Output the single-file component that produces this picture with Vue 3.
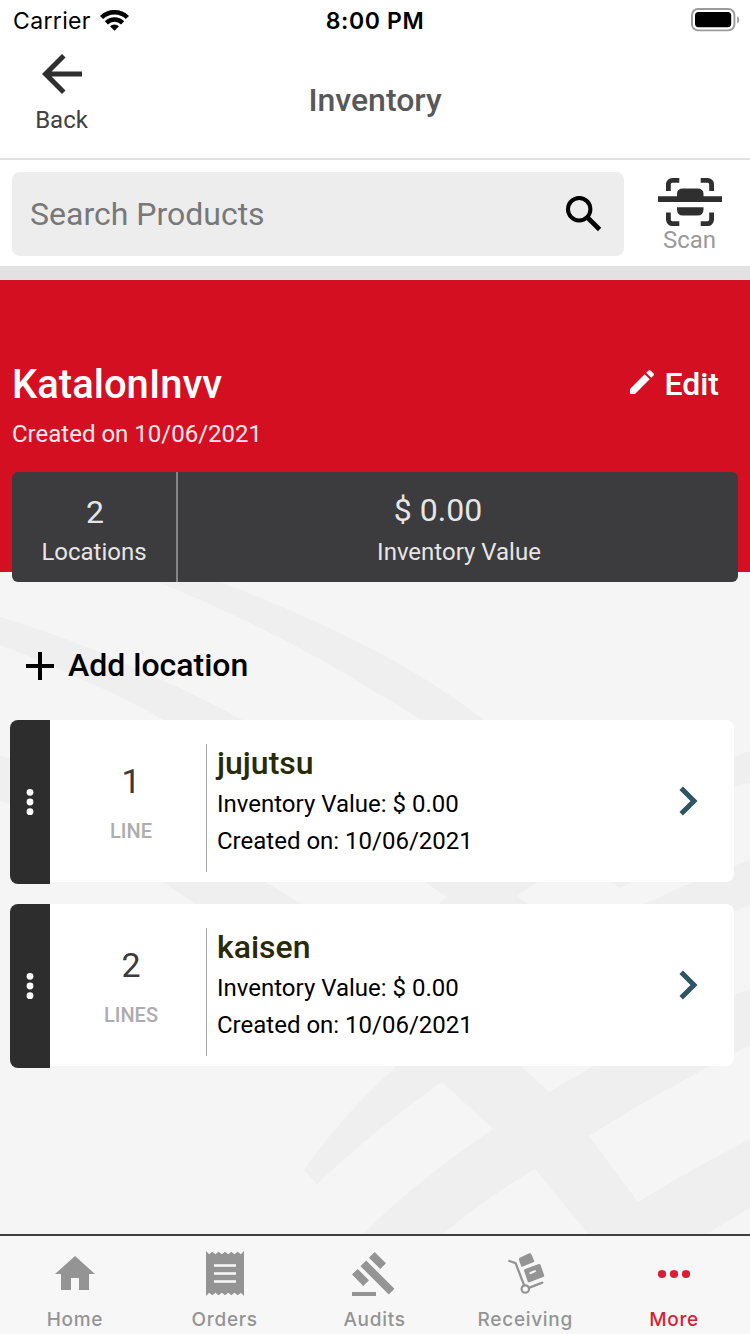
<script setup>
const cards = [
  { name: 'jujutsu', count: 1, unit: 'LINE', value: '$ 0.00', created: '10/06/2021' },
  { name: 'kaisen', count: 2, unit: 'LINES', value: '$ 0.00', created: '10/06/2021' },
]
</script>

<template>
  <div class="screen">
    <div class="status">
      <div class="carrier">
        <span>Carrier</span>
        <svg width="29" height="23" viewBox="0 0 30 23">
          <g fill="none" stroke="#000" stroke-width="4.6">
            <path d="M1.6 8.4a19.2 19.2 0 0 1 26.8 0" />
            <path d="M6.6 13.9a12 12 0 0 1 16.8 0" />
          </g>
          <path d="M15 22.2l-4.6-4.7a6.6 6.6 0 0 1 9.2 0z" />
        </svg>
      </div>
      <span class="time">8:00 PM</span>
      <svg class="battery" width="49" height="24" viewBox="0 0 49 24">
        <rect x="1" y="1" width="42.4" height="21.4" rx="6" fill="none" stroke="#9b9b9b" stroke-width="1.9" />
        <rect x="4" y="4" width="36.2" height="15.2" rx="3.6" />
        <path d="M46.2 8v7.6q2-1.2 2-3.8t-2-3.8z" fill="#9b9b9b" />
      </svg>
    </div>

    <header class="header">
      <div class="back">
        <svg width="60" height="60" viewBox="0 0 24 24">
          <path fill="#2f2f30" d="M20 11H7.83l5.59-5.59L12 4l-8 8 8 8 1.41-1.41L7.83 13H20v-2z" />
        </svg>
        <span>Back</span>
      </div>
      <h1>Inventory</h1>
      <div></div>
    </header>

    <section class="search">
      <div class="field">
        <span>Search Products</span>
        <svg width="36" height="36" viewBox="0 0 36 36" fill="none" stroke="#000">
          <circle cx="13.2" cy="13.2" r="11.2" stroke-width="4" />
          <path d="M22 22l11.6 11.5" stroke-width="4.6" />
        </svg>
      </div>
      <div class="scan">
        <svg width="64" height="48" viewBox="0 0 64 48" fill="#2f2f30">
          <g fill="none" stroke="#2f2f30" stroke-width="4.8">
            <path d="M10.4 13V6.4a4 4 0 0 1 4-4H21.3" />
            <path d="M42.7 2.4H49.6a4 4 0 0 1 4 4V13" />
            <path d="M10.4 34.6v7a4 4 0 0 0 4 4H21.3" />
            <path d="M42.7 45.6H49.6a4 4 0 0 0 4-4v-7" />
          </g>
          <path d="M0 18.3h19V16q0-5.5 6-5.5h14.5q6 0 6 5.5v2.3H64v5.6H0z" />
          <path d="M19 29.2h26.5v2q0 6.3-6 6.3H25q-6 0-6-6.3z" />
        </svg>
        <span>Scan</span>
      </div>
    </section>

    <section class="hero">
      <div class="hero-row">
        <h2>KatalonInvv</h2>
        <div class="edit">
          <svg width="32" height="32" viewBox="0 0 24 24" fill="#fff">
            <path d="M3 17.25V21h3.75L17.81 9.94l-3.75-3.75L3 17.25zM20.71 7.04a1 1 0 0 0 0-1.41l-2.34-2.34a1 1 0 0 0-1.41 0l-1.83 1.83 3.75 3.75 1.83-1.83z" />
          </svg>
          <span>Edit</span>
        </div>
      </div>
      <p class="created">Created on 10/06/2021</p>
      <div class="stats">
        <div class="stat locations">
          <strong>2</strong>
          <span>Locations</span>
        </div>
        <div class="stat value">
          <strong>$ 0.00</strong>
          <span>Inventory Value</span>
        </div>
      </div>
    </section>

    <main class="content">
      <svg class="watermark" width="750" height="662" viewBox="0 572 750 662" fill="#efefef">
        <path d="M132 572H192Q290 606 375 651Q436 682 500 732H438Q405 708 375 692Q270 625 132 572z" />
        <path d="M0 617Q60 635 100 653Q180 685 265 732H185Q130 700 83 680Q40 660 0 645z" />
        <path d="M0 755L20 763V807L0 801z" />
        <path d="M145 872H249L320 915H208Q190 898 145 872z" />
        <path d="M410 872H552L538 882L517 896L545 918H422L447 897z" />
        <path d="M610 882h22l-12 6z" />
        <path d="M720 762L750 751V782L720 792z" />
        <path d="M630 910L662 896Q700 878 750 860V905L720 917z" />
        <path d="M720 1000L750 989V1045L720 1060z" />
        <path d="M415 1050Q345 1110 304 1170L317 1184Q380 1125 442 1082L493 1129Q420 1178 363 1234H443Q490 1195 535 1169L588 1234H707Q728 1220 750 1208V1139Q690 1170 638 1202L589 1136Q650 1097 735 1053L612 1055L549 1092L504 1050z" />
      </svg>

      <div class="add">
        <svg width="28" height="28" viewBox="0 0 28 28"><path d="M12 0h4v12h12v4H16v12h-4V16H0v-4h12z" /></svg>
        <span>Add location</span>
      </div>

      <article v-for="card in cards" :key="card.name" class="card">
        <div class="handle">
          <svg width="8" height="28" viewBox="0 0 8 28" fill="#fff">
            <circle cx="4" cy="4.3" r="3.4" />
            <circle cx="4" cy="14" r="3.4" />
            <circle cx="4" cy="23.7" r="3.4" />
          </svg>
        </div>
        <div class="count">
          <strong>{{ card.count }}</strong>
          <span>{{ card.unit }}</span>
        </div>
        <div class="details">
          <h3>{{ card.name }}</h3>
          <p>Inventory Value: {{ card.value }}</p>
          <p>Created on: {{ card.created }}</p>
        </div>
        <svg class="chevron" width="20" height="30" viewBox="0 0 20 30">
          <path d="M2.2 2.2L15 15L2.2 27.8" fill="none" stroke="#2f5565" stroke-width="5" />
        </svg>
      </article>
    </main>

    <nav class="tabs">
      <div class="tab">
        <svg width="48" height="48" viewBox="0 0 24 24"><path d="M10 20v-6h4v6h5v-8h3L12 3 2 12h3v8z" /></svg>
        <span>Home</span>
      </div>
      <div class="tab">
        <svg width="48" height="48" viewBox="0 0 48 48">
          <path d="M5 1l3.2 3.2L11.3 1.8l3.2 2.4L17.6 1.8l3.2 2.4L24 1.8l3.2 2.4L30.4 1.8l3.1 2.4L36.7 1.8l3.1 2.4L43 1V46l-3.2-3.2-3.1 2.4-3.2-2.4-3.1 2.4-3.2-2.4L24 45.2l-3.2-2.4-3.2 2.4-3.1-2.4-3.2 2.4-3.1-2.4L5 46z" />
          <path d="M13 15.5h22M13 23.5h22M13 31.5h22" stroke="#f7f7f7" stroke-width="2.6" />
        </svg>
        <span>Orders</span>
      </div>
      <div class="tab">
        <svg width="48" height="48" viewBox="0 0 24 24">
          <path d="M1 21h12v2H1zM5.24 8.07l2.83-2.83 14.14 14.14-2.83 2.83zM12.32 1l5.66 5.66-2.83 2.83-5.66-5.66zM3.83 9.48l5.66 5.66-2.83 2.83L1 12.31z" />
        </svg>
        <span>Audits</span>
      </div>
      <div class="tab receiving">
        <svg width="48" height="48" viewBox="0 0 48 48">
          <path d="M8.3 11l6.3 2.2L23 35M28.5 37.6L41.3 32.6" fill="none" stroke="#949494" stroke-width="2.3" stroke-linecap="round" stroke-linejoin="round" />
          <circle cx="24.3" cy="39" r="3.7" fill="none" stroke="#949494" stroke-width="2.2" />
          <path d="M18.7 7.8L28.3 3.3q1.5-.6 2.1.9l3.1 7.5L20.6 16.9q-1.1-2.5-2.5-6.5-.6-1.8.6-2.6z" />
          <path fill-rule="evenodd" d="M24.8 18.7L37.8 14q1.2-.4 1.7.8l3.6 10.3q.4 1.4-.9 2L28.4 32.2q-1.2.4-1.7-.8L23.1 21q-.5-1.6 1.7-2.3zM29.2 22.1q-1 .5-.7 1.3t1.4.5L34.4 22q1-.5.7-1.3t-1.4-.4z" />
        </svg>
        <span>Receiving</span>
      </div>
      <div class="tab active">
        <svg width="48" height="48" viewBox="0 0 48 48">
          <circle cx="12" cy="24" r="4.1" /><circle cx="24" cy="24" r="4.1" /><circle cx="36" cy="24" r="4.1" />
        </svg>
        <span>More</span>
      </div>
    </nav>
  </div>
</template>

<style>
body { margin: 0; background: #fff; }
</style>

<style scoped>
.screen {
  width: 750px;
  height: 1334px;
  display: flex;
  flex-direction: column;
  overflow: hidden;
  background: #fff;
  font-family: Roboto, "Liberation Sans", sans-serif;
  font-size: 24px;
  white-space: nowrap;
}
.screen svg { display: block; flex: none; }
h1, h2, h3, p { margin: 0; font-weight: 500; }
strong { font-weight: 400; }

.status {
  height: 40px;
  box-sizing: border-box;
  padding: 1px 10px 0 13px;
  display: grid;
  grid-template-columns: 1fr auto 1fr;
  align-items: center;
  font-family: Inter, "Liberation Sans", sans-serif;
  font-size: 23px;
}
.carrier { display: flex; align-items: center; gap: 9px; letter-spacing: 0.35px; }
.carrier svg { margin-top: -1px; }
.time { font-weight: 600; letter-spacing: 0.6px; margin-right: 3px; }
.battery { justify-self: end; margin-top: -1px; }

.header {
  height: 118px;
  border-bottom: 2px solid #e2e2e2;
  display: grid;
  grid-template-columns: 124px 1fr 124px;
}
.back {
  display: flex;
  flex-direction: column;
  align-items: center;
  padding-top: 4px;
  color: #414143;
}
.back span { line-height: 32px; margin-right: 1px; }
.header h1 {
  font-size: 32px;
  line-height: 40px;
  padding-top: 40px;
  text-align: center;
  color: #58585a;
}

.search {
  height: 106px;
  border-bottom: 14px solid #e2e2e2;
  display: flex;
}
.field {
  width: 572px;
  height: 84px;
  margin: 12px 0 0 12px;
  padding: 0 22px 0 18px;
  border-radius: 8px;
  background: #ededed;
  display: flex;
  align-items: center;
  justify-content: space-between;
  font-size: 32px;
  color: #787878;
}
.scan {
  width: 64px;
  margin: 18px 0 0 34px;
  display: flex;
  flex-direction: column;
  align-items: center;
  color: #9a9a9a;
}
.scan span { line-height: 28px; margin-right: 1px; }

.hero {
  height: 292px;
  box-sizing: border-box;
  padding: 80px 12px 0;
  background: #d50f22;
  color: #fff;
  position: relative;
  z-index: 1;
}
.hero-row { display: flex; justify-content: space-between; height: 48px; }
.hero h2 { font-size: 40px; line-height: 50px; }
.edit {
  display: flex;
  gap: 6px;
  padding: 6px 19px 0 0;
  font-size: 32px;
  font-weight: 500;
  line-height: 36px;
}
.created { font-weight: 400; line-height: 32px; padding-top: 10px; color: #fbe9eb; }
.stats {
  display: flex;
  height: 110px;
  margin-top: 22px;
  border-radius: 6px;
  background: #3c3b3d;
  color: #e6e6e6;
}
.stat { display: flex; flex-direction: column; align-items: center; }
.stat strong { font-size: 32px; line-height: 40px; }
.stat span { line-height: 32px; }
.locations { width: 164px; border-right: 2px solid #858587; padding-top: 20px; }
.locations strong { margin-left: 2px; }
.locations span { margin-top: 4px; }
.value { width: 560px; box-sizing: border-box; padding: 18px 0 0 2px; }
.value strong { margin-right: 42px; }
.value span { margin-top: 6px; }

.content {
  position: relative;
  height: 662px;
  background: #f5f5f5;
}
.watermark { position: absolute; left: 0; top: 0; }
.add {
  position: relative;
  display: flex;
  align-items: center;
  gap: 14px;
  height: 40px;
  padding: 74px 0 34px 26px;
  font-size: 32px;
  font-weight: 500;
  color: #000;
}
.add span { padding-bottom: 2px; }
.card {
  position: relative;
  display: flex;
  width: 724px;
  height: 162px;
  margin: 0 0 22px 10px;
  border-radius: 8px;
  background: #fff;
}
.handle {
  width: 40px;
  height: 164px;
  border-radius: 8px 0 0 8px;
  background: #2d2d2d;
  display: flex;
  align-items: center;
  justify-content: center;
}
.count {
  width: 162px;
  padding-top: 41px;
  display: flex;
  flex-direction: column;
  align-items: center;
}
.count strong { font-size: 34px; line-height: 40px; font-weight: 400; color: #3a3a3c; }
.count span { font-size: 20px; font-weight: 500; line-height: 24px; margin-top: 18px; color: #adadad; }
.details {
  height: 128px;
  margin: 24px 0 0 -6px;
  padding-left: 10px;
  border-left: 1px solid #a6a6a6;
  flex: 1;
}
.details h3 { font-size: 32px; line-height: 38px; color: #292a06; }
.details p { font-weight: 400; line-height: 37px; color: #000; }
.details h3 + p { margin-top: 4px; }
.chevron { margin: 66px 35px 0 0; }

.tabs {
  height: 98px;
  border-top: 2px solid #3f3f41;
  display: flex;
  background: #f7f7f7;
  color: #949494;
  font-family: Inter, "Liberation Sans", sans-serif;
  font-size: 19px;
  font-weight: 500;
}
.tab {
  width: 149.8px;
  box-sizing: border-box;
  padding-top: 14px;
  display: flex;
  flex-direction: column;
  align-items: center;
  letter-spacing: 0.7px;
}
.receiving { padding-left: 2px; }
.tab svg { fill: currentColor; }
.tab span { line-height: 24px; margin-top: 10px; }
.active { color: #d71f38; }
</style>
